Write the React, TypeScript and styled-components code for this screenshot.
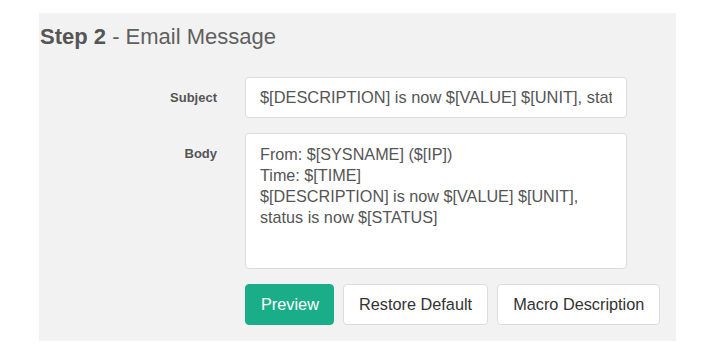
import React from "react";
import styled, { createGlobalStyle } from "styled-components";

const Global = createGlobalStyle`
  html, body { margin: 0; padding: 0; background: #ffffff; }
  body { font-family: "Liberation Sans", Arial, sans-serif; }
`;

const Panel = styled.section`
  margin: 13px 0 0 39px;
  width: 637px;
  box-sizing: border-box;
  background: #f2f2f2;
  padding: 11px 0 16px 1px;
`;

const Title = styled.h2`
  margin: 0 0 27px 0;
  font-size: 22px;
  line-height: 26px;
  font-weight: normal;
  color: #5f5f5f;
  b { font-weight: bold; color: #555555; }
`;

const Form = styled.div`
  display: grid;
  grid-template-columns: 177px auto;
  column-gap: 28px;
  row-gap: 15px;
`;

const Label = styled.label<{ $top: number }>`
  justify-self: end;
  align-self: start;
  padding-top: ${(p) => p.$top}px;
  font-size: 13px;
  font-weight: bold;
  color: #555555;
`;

const Field = styled.input`
  width: 382px;
  height: 41px;
  box-sizing: border-box;
  border: 1px solid #dcdcdc;
  border-radius: 4px;
  background: #fff;
  padding: 0 14px;
  font-family: "Liberation Sans", Arial, sans-serif;
  font-size: 16.4px;
  color: #555555;
  outline: none;
`;

const Area = styled.textarea`
  width: 382px;
  height: 136px;
  box-sizing: border-box;
  border: 1px solid #dcdcdc;
  border-radius: 4px;
  background: #fff;
  padding: 10px 14px;
  font-family: "Liberation Sans", Arial, sans-serif;
  font-size: 16.2px;
  line-height: 21px;
  color: #555555;
  resize: none;
  outline: none;
  display: block;
`;

const Buttons = styled.div`
  grid-column: 2;
  display: flex;
  gap: 9px;
`;

const Button = styled.button<{ $primary?: boolean }>`
  height: 41px;
  box-sizing: border-box;
  padding: 0 15px;
  border-radius: 4px;
  border: 1px solid ${(p) => (p.$primary ? "#1aae88" : "#dcdcdc")};
  background: ${(p) => (p.$primary ? "#1aae88" : "#ffffff")};
  color: ${(p) => (p.$primary ? "#ffffff" : "#333333")};
  font-family: "Liberation Sans", Arial, sans-serif;
  font-size: 16.3px;
  cursor: pointer;
`;

const bodyText =
  "From: $[SYSNAME] ($[IP])\nTime: $[TIME]\n$[DESCRIPTION] is now $[VALUE] $[UNIT],\nstatus is now $[STATUS]";

export default function App() {
  return (
    <>
      <Global />
      <Panel>
        <Title>
          <b>Step 2</b> - Email Message
        </Title>
        <Form>
          <Label $top={13}>Subject</Label>
          <Field
            readOnly
            value="$[DESCRIPTION] is now $[VALUE] $[UNIT], status is now $[STATUS]"
          />
          <Label $top={13}>Body</Label>
          <Area readOnly value={bodyText} />
          <Buttons>
            <Button $primary style={{ width: 89 }}>Preview</Button>
            <Button>Restore Default</Button>
            <Button>Macro Description</Button>
          </Buttons>
        </Form>
      </Panel>
    </>
  );
}
